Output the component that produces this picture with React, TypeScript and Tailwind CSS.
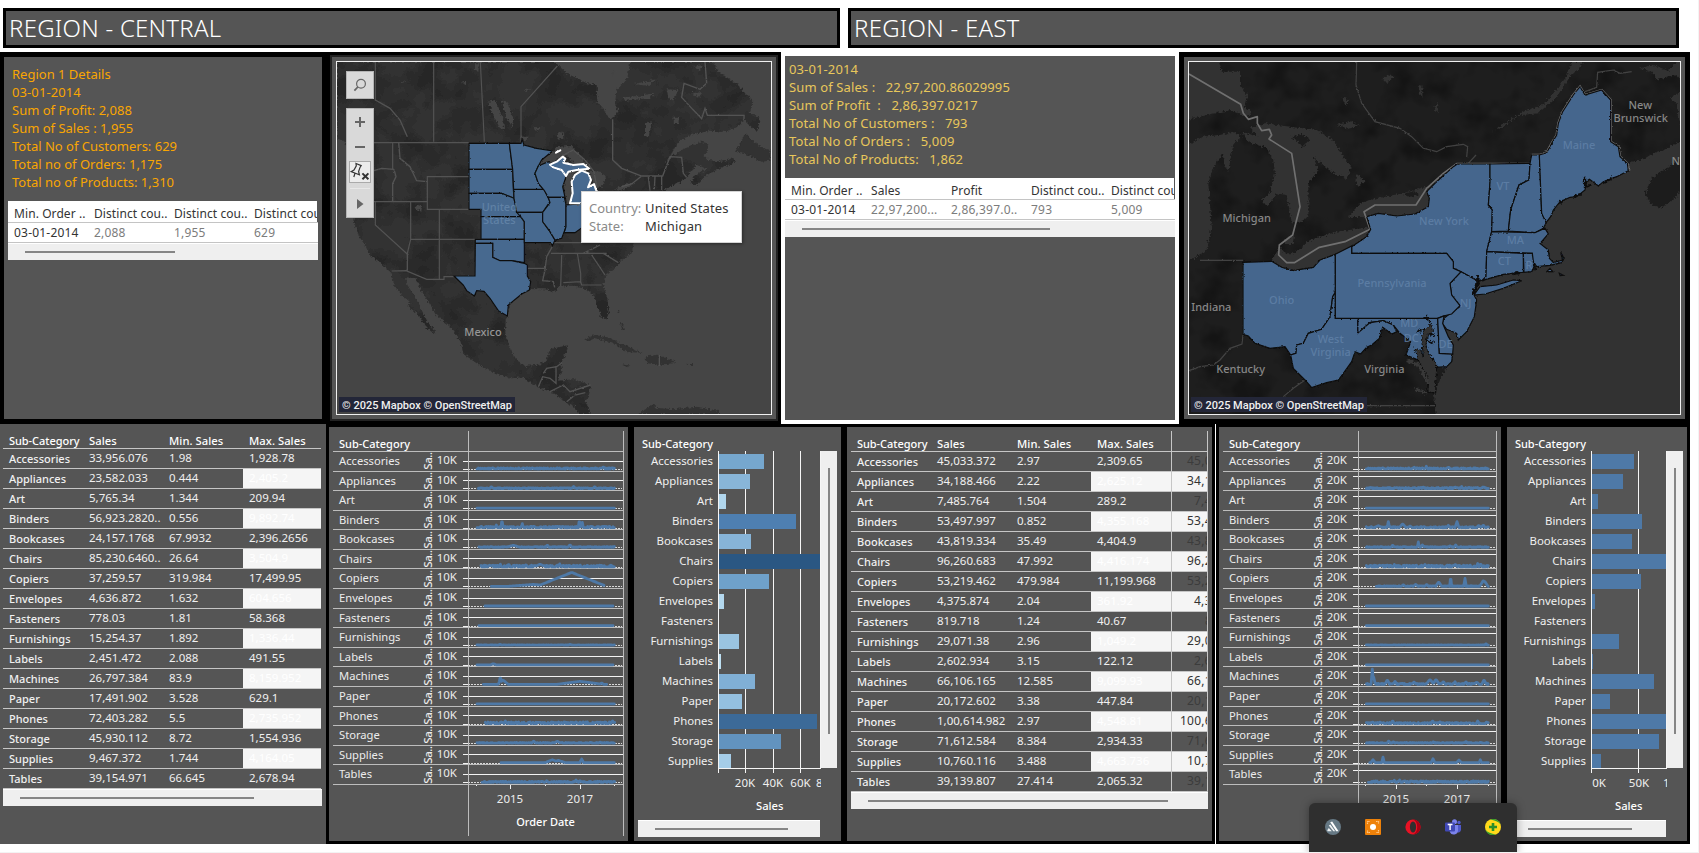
import type { ReactNode } from "react";

const CATEGORIES = [
  "Accessories", "Appliances", "Art", "Binders", "Bookcases", "Chairs", "Copiers", "Envelopes", "Fasteners",
  "Furnishings", "Labels", "Machines", "Paper", "Phones", "Storage", "Supplies", "Tables",
];

const CENTRAL: string[][] = [
  ["33,956.076", "1.98", "1,928.78"], ["23,582.033", "0.444", "2,405.2"], ["5,765.34", "1.344", "209.94"],
  ["56,923.2820..", "0.556", "9,892.74"], ["24,157.1768", "67.9932", "2,396.2656"], ["85,230.6460..", "26.64", "3,504.9"],
  ["37,259.57", "319.984", "17,499.95"], ["4,636.872", "1.632", "604.656"], ["778.03", "1.81", "58.368"],
  ["15,254.37", "1.892", "1,336.44"], ["2,451.472", "2.088", "491.55"], ["26,797.384", "83.9", "8,159.952"],
  ["17,491.902", "3.528", "629.1"], ["72,403.282", "5.5", "2,735.952"], ["45,930.112", "8.72", "1,554.936"],
  ["9,467.372", "1.744", "4,164.05"], ["39,154.971", "66.645", "2,678.94"],
];

const EAST: string[][] = [
  ["45,033.372", "2.97", "2,309.65", "45,0"], ["34,188.466", "2.22", "2,625.12", "34,1"], ["7,485.764", "1.504", "289.2", "7,4"],
  ["53,497.997", "0.852", "4,355.168", "53,4"], ["43,819.334", "35.49", "4,404.9", "43,8"], ["96,260.683", "47.992", "4,416.174", "96,2"],
  ["53,219.462", "479.984", "11,199.968", "53,2"], ["4,375.874", "2.04", "361.92", "4,3"], ["819.718", "1.24", "40.67", "8"],
  ["29,071.38", "2.96", "1,049.2", "29,0"], ["2,602.934", "3.15", "122.12", "2,6"], ["66,106.165", "12.585", "9,099.93", "66,1"],
  ["20,172.602", "3.38", "447.84", "20,1"], ["1,00,614.982", "2.97", "4,548.81", "100,6"], ["71,612.584", "8.384", "2,934.33", "71,6"],
  ["10,760.116", "3.488", "4,663.736", "10,7"], ["39,139.807", "27.414", "2,065.32", "39,1"],
];

const NOTO = "font-['Noto_Sans',sans-serif]";

function Title({ children, className }: { children: ReactNode; className: string }) {
  return (
    <h1 className={`flex h-10 shrink-0 items-center border-[3px] border-black bg-[#555] pl-[3px] text-[24px] font-light tracking-[0.25px] text-white ${className}`}>
      {children}
    </h1>
  );
}

function HScroll({ className, thumb }: { className: string; thumb: string }) {
  return (
    <div className={`flex h-[17px] items-center border-t border-white bg-[#efefef] ${className}`}>
      <div className={`h-[2px] bg-[#858585] ${thumb}`} />
    </div>
  );
}

function WhiteTable({ head, row, thumb, className }: { head: string[]; row: string[]; thumb: string; className: string }) {
  return (
    <div className={`text-[12px] text-[#333] ${className}`}>
      <div className="mr-px flex h-[21px] overflow-hidden bg-white pl-[6px] whitespace-nowrap">
        {head.map((h, i) => (
          <span key={i} className="w-20 shrink-0 pt-[4px] leading-[18px] tracking-[0.08px]">{h}</span>
        ))}
      </div>
      <div className="flex h-[21px] overflow-hidden border-y border-[#c4c4c4] bg-white pl-[6px] leading-[20px] whitespace-nowrap">
        {row.map((h, i) => (
          <span key={i} className={`w-20 shrink-0 tracking-[0.2px] ${i ? "text-[#7c7c7c]" : ""}`}>{h}</span>
        ))}
      </div>
      <HScroll className="" thumb={`ml-[17px] ${thumb}`} />
    </div>
  );
}

function SalesTable({ rows, extra }: { rows: string[][]; extra?: boolean }) {
  return (
    <div className="text-[11.5px] whitespace-nowrap text-[#f0f0f0]">
      <div className="flex h-5 items-end border-b border-[#c6c6c6] pl-[6px] text-[11.2px] leading-[15px] font-medium text-white">
        {["Sub-Category", "Sales", "Min. Sales", "Max. Sales"].map((h) => (
          <span key={h} className={`w-20 shrink-0 ${h === "Sub-Category" ? "text-[11px] tracking-[-0.05px]" : "tracking-[0.05px]"}`}>{h}</span>
        ))}
      </div>
      {rows.map((r, i) => {
        const odd = i % 2 === 1;
        return (
          <div key={i} className="flex h-5 overflow-hidden border-b border-[#c6c6c6] leading-[18px]">
            <span className="w-20 shrink-0 pt-px pl-[6px] text-[11px] leading-[18px] font-medium">{CATEGORIES[i]}</span>
            <span className="w-20 shrink-0 pl-[6px]">{r[0]}</span>
            <span className="w-20 shrink-0 pl-[6px]">{r[1]}</span>
            <span className={`shrink-0 pl-[6px] ${extra ? "w-20" : "w-[78px]"} ${odd ? "bg-[#f5f5f5] text-white" : ""}`}>{r[2]}</span>
            {extra && (
              <span
                className={`w-[37px] shrink-0 overflow-hidden text-[12px] tracking-[0.25px] ${odd ? "bg-[#f5f5f5] text-[#333]" : "text-[#3c3c3c]"}`}
                style={{ paddingLeft: r[3].length === 5 ? 9 : r[3].length === 4 ? 16 : r[3].length === 3 ? 23 : 34 }}
              >
                {r[3]}
              </span>
            )}
          </div>
        );
      })}
    </div>
  );
}

type Spikes = { from: number; to: number; noise: number; peaks: [number, number, number][] };

const CENTRAL_LINES: Spikes[] = [
  { from: 471, to: 884, noise: 3, peaks: [[743, 3, 5], [850, 7, 5], [878, 4, 3]] },
  { from: 475, to: 884, noise: 2, peaks: [[514, 6, 5], [761, 6, 5], [824, 6, 5]] },
  { from: 471, to: 884, noise: 0, peaks: [] },
  { from: 471, to: 884, noise: 4, peaks: [[529, 8, 3], [546, 26, 3], [607, 12, 3], [778, 26, 3], [787, 16, 3]] },
  { from: 477, to: 884, noise: 2, peaks: [[580, 6, 20], [682, 7, 5], [750, 8, 6]] },
  { from: 483, to: 884, noise: 5, peaks: [[541, 8, 3], [566, 10, 3], [617, 6, 3], [660, 8, 16], [719, 9, 3]] },
  { from: 514, to: 852, noise: 0, peaks: [[640, 6, 80], [675, 10, 8], [755, 42, 105], [757, 42, 48], [815, 6, 50]] },
  { from: 495, to: 880, noise: 0, peaks: [] },
  { from: 477, to: 880, noise: 0, peaks: [] },
  { from: 471, to: 884, noise: 1, peaks: [[540, 3, 5], [750, 3, 5]] },
  { from: 471, to: 880, noise: 0, peaks: [[520, 3, 8]] },
  { from: 490, to: 860, noise: 0, peaks: [[541, 23, 5], [549, 13, 16], [780, 9, 70], [783, 9, 8], [845, 4, 6]] },
  { from: 471, to: 884, noise: 0, peaks: [] },
  { from: 496, to: 884, noise: 5, peaks: [[556, 8, 4], [627, 5, 4], [790, 5, 4], [878, 8, 4]] },
  { from: 471, to: 884, noise: 2, peaks: [[641, 6, 5], [712, 6, 10], [840, 4, 4]] },
  { from: 543, to: 884, noise: 0, peaks: [[697, 9, 22], [715, 7, 22], [785, 11, 6]] },
  { from: 486, to: 884, noise: 3, peaks: [[680, 5, 5], [768, 7, 5], [780, 5, 4]] },
];

const EAST_LINES: Spikes[] = [
  { from: 469, to: 836, noise: 3, peaks: [[613, 5, 3], [649, 8, 3], [716, 7, 3]] },
  { from: 469, to: 836, noise: 3, peaks: [[640, 5, 4], [736, 6, 3], [755, 6, 3], [820, 5, 8]] },
  { from: 469, to: 836, noise: 0, peaks: [] },
  { from: 469, to: 836, noise: 3, peaks: [[505, 6, 12], [535, 18, 4], [578, 12, 10], [600, 6, 5], [715, 7, 5], [741, 18, 6], [806, 7, 6], [820, 8, 6]] },
  { from: 469, to: 836, noise: 2, peaks: [[548, 7, 4], [625, 16, 3], [637, 7, 6], [737, 7, 5], [720, 5, 5]] },
  { from: 469, to: 836, noise: 5, peaks: [[532, 7, 4], [553, 7, 4], [645, 7, 6], [736, 8, 6], [803, 10, 4], [812, 10, 4]] },
  { from: 499, to: 836, noise: 2, peaks: [[580, 6, 5], [617, 6, 8], [650, 7, 5], [686, 14, 9], [722, 32, 3], [765, 24, 4], [820, 18, 11], [824, 16, 10]] },
  { from: 469, to: 836, noise: 0, peaks: [] },
  { from: 469, to: 836, noise: 0, peaks: [] },
  { from: 469, to: 836, noise: 1, peaks: [[828, 5, 4]] },
  { from: 469, to: 836, noise: 0, peaks: [] },
  { from: 469, to: 836, noise: 3, peaks: [[487, 46, 4], [491, 22, 5], [532, 14, 7], [555, 9, 6], [612, 8, 5], [660, 15, 12], [678, 15, 10], [700, 9, 6], [735, 8, 5], [768, 8, 5], [800, 7, 8], [822, 14, 7]] },
  { from: 469, to: 836, noise: 0, peaks: [] },
  { from: 469, to: 836, noise: 3, peaks: [[488, 6, 4], [510, 6, 4], [548, 9, 5], [668, 9, 5], [690, 6, 5], [803, 8, 4], [830, 6, 4]] },
  { from: 469, to: 836, noise: 2, peaks: [[536, 7, 5], [550, 5, 4], [670, 5, 4], [768, 6, 4]] },
  { from: 479, to: 836, noise: 0, peaks: [[489, 9, 7], [519, 17, 4], [669, 12, 6], [747, 8, 8], [811, 9, 4]] },
  { from: 475, to: 836, noise: 4, peaks: [[553, 6, 4], [569, 7, 4], [582, 5, 4], [690, 5, 4]] },
];

function trace(s: Spikes, row: number, top: number) {
  const pts: string[] = [];
  for (let x = s.from; x <= s.to; x += 2) {
    const wobble = Math.abs(Math.sin(x * 12.9898 + row * 78.233) * 43758.5453) % 1;
    let h = wobble > 0.55 ? s.noise * wobble : 0;
    for (const [px, ph, pw] of s.peaks) h = Math.max(h, ph * (1 - Math.abs(x - px) / pw));
    pts.push(`${(x / 3 - 9).toFixed(2)},${(top + 17.4 - h / 3).toFixed(2)}`);
  }
  return pts.join(" ");
}

function LinePanel({ data, tick, grid, right, ticks, axisTitle, plot }: {
  data: Spikes[]; tick: string; grid: number; right: number; ticks: number[]; axisTitle: boolean; plot: string;
}) {
  const rowH = 333 / 17;
  return (
    <div className="relative h-full pt-[4px] pl-1 text-[11.5px] text-[#ececec]">
      <div className={`flex h-[21px] items-end border-b border-[#bdbdbd] pl-[6px] text-[11px] leading-[15px] font-medium text-white ${plot}`}>
        <span>Sub-Category</span>
      </div>
      {CATEGORIES.map((c) => (
        <div key={c} className={`flex border-b border-[#bdbdbd] ${plot}`} style={{ height: rowH }}>
          <span className="w-[85px] pl-[6px] text-[11.2px] leading-[17.6px]">{c}</span>
          <span className="flex w-[20px] items-center justify-center">
            <span className="-rotate-90 text-[11.5px] leading-[10px] font-medium tracking-[-0.4px] whitespace-nowrap">Sa..</span>
          </span>
          <span className="flex w-[19px] justify-end leading-[16px] whitespace-nowrap">{tick}</span>
        </div>
      ))}
      <div className="ml-[135px] flex pt-[5px] leading-[18px]" style={{ width: right - 139 }}>
        <span className="text-center" style={{ width: (ticks[1] - 139) * 2 }}>2015</span>
        <span className="text-center" style={{ width: (ticks[3] - 139 - (ticks[1] - 139) * 2) * 2 }}>2017</span>
      </div>
      {axisTitle && <div className="ml-[135px] w-[155px] pt-[5px] text-center text-[11px] leading-[18px] font-medium text-white">Order Date</div>}
      <svg className="absolute top-0 left-0" width="299" height="414" viewBox="0 0 299 414" fill="none">
        {data.map((s, i) => {
          const top = 24.5 + i * rowH;
          const g = Math.round(top + grid) + 0.5;
          const z = Math.round(top + 17.4) + 0.5;
          return (
            <g key={i}>
              <path d={`M134 ${g}H${right}M134 ${z}h5`} stroke="#f2f2f2" />
              <path d={`M139 ${z}H${right - 1}`} stroke="#d8d8d8" strokeDasharray="2 1" />
              <polyline points={trace(s, i, top)} stroke="#4e79a7" strokeWidth="2.8" strokeLinejoin="round" strokeLinecap="round" />
            </g>
          );
        })}
        <path d={`M139.5 4V409M${right + 0.5} 4V409`} stroke="#bdbdbd" />
        {ticks.map((t, i) => (
          <path key={t} d={`M${t + 0.5} 358v${i % 2 ? 4 : 1}`} stroke="#f2f2f2" />
        ))}
      </svg>
    </div>
  );
}

function BarPanel({ ends, colors, origin, gridX, right, children, thumb }: {
  ends: number[]; colors: string[]; origin: number; gridX: number[]; right: number; children: ReactNode; thumb: string;
}) {
  return (
    <div className="flex h-full flex-col pt-[9px]">
      <div className="w-[79px] text-right text-[11px] leading-[15px] font-medium text-white">Sub-Category</div>
      <div className="flex h-[317px]">
        <div className="w-[79px] overflow-hidden text-right text-[11.4px] text-[#f0f0f0]">
          {CATEGORIES.slice(0, 16).map((c) => (
            <div key={c} className="h-5 leading-[20px]">{c}</div>
          ))}
        </div>
        <svg className="ml-[5px] h-[322px] shrink-0" style={{ width: right - 84 }} viewBox={`84 24 ${right - 84} 322`} fill="none">
          {gridX.map((x) => (
            <path key={x} d={`M${x + 0.5} 24V346`} stroke="#f5f5f5" />
          ))}
          {ends.map((e, i) => e > 0 && <rect key={i} x={85} y={27 + i * 20} width={e / 3 - origin - 85} height={i === 15 ? 14 : 15} fill={colors[i % colors.length]} />)}
          <path d={`M84.5 24V346M84 341.5H${right}M${right - 0.5} 24V341`} stroke="#f5f5f5" />
        </svg>
        <div className="flex h-[317px] w-4 justify-center bg-[#efefef] pt-[17px]">
          <div className="h-[266px] w-[2px] bg-[#858585]" />
        </div>
      </div>
      <div className="flex h-[23px] items-end overflow-hidden text-[11.5px] leading-[16px] text-[#f0f0f0]" style={{ width: right }}>{children}</div>
      <div className="pt-[7px] pl-[122px] text-[11.2px] leading-[16px] font-medium text-white">
        <span className={right > 170 ? "" : "-ml-[14px]"}>Sales</span>
      </div>
      <div className="pt-[6px] pl-1">
        <div style={{ width: right - 5 }}>
          <HScroll className="" thumb={`ml-[17px] ${thumb}`} />
        </div>
      </div>
    </div>
  );
}

const CENTRAL_COLORS = [
  "#76a7ce", "#88b5d8", "#b0d6ed", "#4e7fb1", "#87b4d8", "#2a5783", "#6fa1ca", "#b3d8ee", "#bddff2",
  "#9ac4e1", "#bddff2", "#80afd5", "#94c0e0", "#3c6a98", "#6293bf", "#a5cde8",
];

function Attribution() {
  return (
    <div className="absolute bottom-[2px] left-[2px] h-[15px] bg-[#232638] px-[3px] pt-px font-['Roboto',sans-serif] text-[11px] leading-[15px] font-medium whitespace-nowrap text-[#f0f0f0]">
      © 2025 Mapbox © OpenStreetMap
    </div>
  );
}

function Rough({ id, scale }: { id: string; scale: number }) {
  return (
    <filter id={id} x="-5%" y="-5%" width="110%" height="110%">
      <feTurbulence type="fractalNoise" baseFrequency="0.14" numOctaves="2" seed="4" result="n" />
      <feDisplacementMap in="SourceGraphic" in2="n" scale={scale} xChannelSelector="R" yChannelSelector="G" />
    </filter>
  );
}

function Relief({ id, tone }: { id: string; tone: string }) {
  return (
    <filter id={id} x="0" y="0" width="100%" height="100%">
      <feTurbulence type="fractalNoise" baseFrequency="0.011" numOctaves="3" seed="11" result="n" />
      <feColorMatrix in="n" type="matrix" values={tone} result="c" />
      <feComposite in="c" in2="SourceGraphic" operator="in" />
    </filter>
  );
}

const WEST_LAND =
  "M51 66H705L740 100 800 130 830 135 832 185 850 205 870 240 895 215 885 190 890 150 920 120 932 66H1178L1200 100 1225 115 1260 140 1275 160 1300 185 1290 218 1320 235 1312 275 1270 240 1250 262 1215 275 1170 272 1110 285 1075 305 1055 340 1035 370 1055 350 1085 330 1140 305 1165 310 1160 335 1150 345 1165 360 1205 365 1240 355 1245 368 1200 385 1160 405 1125 438 1112 430 1125 405 1160 385 1130 375 1110 400 1090 420 1050 440 1030 455 1022 470 1000 490 960 530 940 612 935 640 905 660 880 690 855 708 850 735 862 775 866 815 860 838 845 832 832 800 822 765 800 748 775 742 740 738 712 742 706 757 680 748 630 747 605 762 575 780 562 828 557 840 556 880 572 930 590 960 615 978 650 975 678 965 690 928 745 915 740 935 722 968 726 990 712 1022 760 1018 812 1036 808 1060 796 1085 810 1112 808 1122H775L765 1100 735 1085 700 1058 650 1040 610 1012 575 1015 520 998 470 970 430 942 422 905 395 865 350 825 325 785 300 745 288 715 258 712 262 735 285 770 300 800 325 850 348 875 342 880 318 862 295 825 262 795 275 790 245 765 222 735 215 700 172 660 148 645 138 620 115 585 100 540 108 490 92 440 95 360 75 305 51 295Z";

const WEST_STATES = [
  "M447 310H568L578 388H447Z", "M447 388H578L580 448 582 475 545 460H447Z",
  "M568 310H603L606 298 612 315 650 325 698 333 665 360 655 378 645 400 655 430 672 450H581L578 388Z",
  "M447 460H545L582 475 590 515 602 530H483V508H447Z", "M483 530H602L613 545V598H483Z",
  "M466 598H613V668L575 662 540 662 518 652V610H466Z",
  "M466 610H518V652L540 662 575 662 613 670 622 675 622 708 632 725 628 750 605 762 565 795 562 828 535 812 510 775 492 754 470 752 463 768 440 752 430 735 402 708H465Z",
  "M581 448H672L690 485 668 517H590L582 475Z", "M590 517H668V545L690 575 705 600 697 618 693 608H613V545L602 530Z",
  "M655 378 685 365 702 380 732 392 738 410 728 440 735 472H685L672 450 655 430 645 400Z",
  "M685 472H733L738 495V560L725 595 705 600 690 575 668 545V517L690 488Z", "M738 495 790 491V560L765 578 733 578 738 560Z",
];

function CentralMap() {
  return (
    <svg className="block" width="434" height="352" viewBox="51 66 1302 1056" fill="none">
      <defs>
        <Rough id="wr" scale={15} />
        <Rough id="wr2" scale={6} />
        <Relief id="wt" tone="0 0 0 0 0  0 0 0 0 0  0 0 0 0 0  3 0 0 0 -1.3" />
      </defs>
      <rect x="51" y="66" width="1302" height="1056" fill="#454545" />
      <g filter="url(#wr)">
        <g fill="#303030">
          <path d={WEST_LAND} />
          <path d="M795 897 825 885 862 892 920 918 968 938 918 936 880 908 825 895 800 905ZM975 950 1012 944 1072 968 1020 974 982 970ZM903 973 930 977 922 982ZM1098 971 1122 973 1118 979ZM955 1122 1000 1093 1012 1104 1060 1108 1130 1100 1200 1114 1200 1122ZM1275 280 1295 300 1330 325 1352 330 1348 362 1325 365 1285 345 1245 335 1262 310ZM900 845h6l6 24h-5zM893 812h5v6h-5z" />
        </g>
        <path d={WEST_LAND} fill="#fff" filter="url(#wt)" opacity="0.2" />
        <g fill="#454545">
          <path d="M655 375 668 352 700 335 712 320 755 318 785 355 800 376 765 374 745 350 728 348 690 372Z" />
          <path d="M736 402 765 393 760 420 757 460 750 490H738L732 455ZM806 392 845 395 858 415 845 440 826 445 812 410ZM880 448 930 428 938 434 900 452ZM833 470 880 450 870 470 840 485ZM505 185 525 180 550 240 552 272 538 262 515 215ZM545 180 562 185 582 240 578 262 560 235ZM602 290h22l-8 18zM710 280l18-5 2 22-18-2zM640 262h24l-12 12zM286 494 306 498 304 515 290 508ZM236 122l25 3-20 4zM425 128l15-3-4 13zM465 75l12-9-2 30-10-6zM610 145l22 3-18 6zM910 172 955 168 1005 158 985 175 915 182ZM940 132 1010 118 985 138ZM1040 148 1075 150 1060 182 1045 172ZM1060 230h16v22h-14zM1120 80l30-6-10 20zM1110 160l38-4-10 14zM975 250l20-6-8 44-12 4zM880 92l6 6-10 10z" />
        </g>
      </g>
      <g stroke="#535353" strokeWidth="4" filter="url(#wr2)">
        <path d="M262 290 240 240 210 205 166 180M878 238V360L905 385 965 408H1028L1050 350 1085 352 1090 400 1100 412M1155 66 1160 130 1140 148 1092 130 1085 172 1118 208 1145 236 1155 205 1162 226H1272V240M236 308 240 355 270 380 290 422 322 425M162 392 185 385 222 388M222 388 228 410 218 430V485M262 640V690L258 692M697 620 680 650 675 690 668 722 700 725 704 742M790 640 840 615M815 645 855 705M850 640 895 668M670 1000 680 985 710 980 726 968M655 1040 668 1010 690 1015 708 1030V978M690 1055 730 1035 750 1055 812 1035M740 1085 765 1065 796 1058M1018 945V978M965 408 935 432 905 440M985 410 990 452M1005 410 1003 448M1025 408V455M722 350 760 330 795 360 822 395 830 440" />
      </g>
      <g stroke="#535353" strokeWidth="3.5">
        <path d="M166 66V182M341 66V305M481 66 493 305M603 305V200L712 78M160 308H447M218 308V388M322 425V410H447M162 485H322V425M322 485V508H447M358 508V718M272 485V598H482M166 485V555L265 645M272 598 262 640M215 693 258 692 320 718H372V710H403M613 608H785M622 685H672M693 640H860M725 645 722 740M772 640 782 700V730M730 728 782 725 785 735H845" />
      </g>
      <g stroke="#101010" strokeWidth="3.5" fill="#46698f" filter="url(#wr2)">
        {WEST_STATES.map((d) => <path key={d} d={d} />)}
      </g>
      <g fill="#6c8db0" fillOpacity="0.7" fontFamily="Noto Sans" fontSize="33" textAnchor="middle" fontWeight="500">
        <text x="538" y="512">United</text>
        <text x="538" y="552">States</text>
      </g>
      <text x="489" y="888" fill="#969696" fontFamily="Noto Sans" fontSize="33" fontWeight="500" textAnchor="middle">Mexico</text>
      <g fill="#46698f" stroke="#fff" strokeWidth="6" strokeLinejoin="round" filter="url(#wr2)">
        <path d="M690 374 712 364 728 350 736 356 730 368 760 375 790 372 808 386 770 390 745 395 738 408 725 390 700 382ZM772 400 785 392 805 400 813 420 804 442 822 432 830 455 820 490H750L758 460 755 425 765 405ZM708 338 721 331Z" />
      </g>
    </svg>
  );
}

const EAST_STATES = [
  "M496 643 545 618V640H830L850 665V685L873 695 840 730 845 765 870 797 845 822 820 828 803 835H496Z",
  "M803 835 822 828 818 850 835 890 850 915 848 942 808 940Z",
];
const EAST_ROUGH = [
  "M219 667 305 664 335 682 368 692 430 682 450 660 496 643V757L488 770 480 830 455 868 415 880 400 910 380 915 378 940 362 945 345 920 300 925 255 910 235 888 219 883Z",
  "M545 620 590 590 602 568 590 530 625 520 680 528 735 522 775 500 778 475 770 455 795 430 850 380 862 372 960 372 960 430 955 495 967 510 965 575 950 635 948 710 940 722 922 722 873 695 850 685 850 665 830 640 545 640Z",
  "M960 372 1080 370 1077 420 1047 435 1022 510 1015 573 965 575 967 510 955 495 960 430Z",
  "M1080 370 1085 345 1108 345 1115 520 1130 545 1120 565 1095 578 1015 573 1022 510 1047 435 1077 420Z",
  "M1108 345 1130 338 1145 310 1160 285 1165 250 1178 215 1210 165 1230 140 1245 165 1295 150 1322 180V305L1345 320 1350 350 1372 370 1375 392 1340 410 1300 425 1285 438 1275 430 1258 418 1250 425 1245 450 1220 470 1200 472 1170 485 1150 510 1142 530 1128 548 1115 520Z",
  "M965 575 1095 578 1125 565 1135 582 1110 610 1135 630 1138 655 1150 668 1178 660 1172 637 1182 655 1175 668 1140 676 1100 680 1087 660V640L950 635Z",
  "M950 635 1060 640V697L1000 703 935 722 948 710Z",
  "M1060 640H1087L1092 680 1085 695 1062 697Z",
  "M912 765 930 740 980 735 1030 720 1055 722 1000 745 945 762ZM1130 695l10-10 8 10zM1168 700l12 6-10 1z",
  "M873 695 922 722 912 765 920 780 913 830 890 875 865 900 860 880 830 868 817 850 822 835 870 797 845 765 840 730Z",
  "M563 835H803L808 940 848 942 845 965 830 980 797 982 790 955 765 965 740 958 708 945 722 905 690 880 670 855 640 842 600 848 563 880Z",
  "M496 757V835H563V880L600 848 640 842 670 855 680 875 665 882 638 862 628 895 605 915 590 922 572 942 555 935 545 965 520 1000 505 1020 470 1028 425 1043 405 1020 370 985 362 945 378 940 380 915 400 910 415 880 455 868 480 830 488 770Z",
];

function EastMap() {
  return (
    <svg className="block" width="491" height="352" viewBox="57 66 1473 1056" fill="none">
      <defs>
        <Rough id="er" scale={16} />
        <Rough id="er2" scale={7} />
        <Relief id="et" tone="0 0 0 0 0  0 0 0 0 0  0 0 0 0 0  3 0 0 0 -1.35" />
      </defs>
      <rect x="57" y="66" width="1473" height="1056" fill="#1e1e1e" />
      <rect x="57" y="66" width="1473" height="1056" fill="#fff" filter="url(#et)" opacity="0.3" />
      <g fill="#333" filter="url(#er)">
        <path d="M1560 290 1490 325 1450 340 1420 358 1385 365 1365 395 1300 415 1200 430 1140 480 1100 550 1100 690 940 715 905 765 910 830 865 890 820 840 825 890 835 975 812 985 792 1060 800 1160H1560Z" />
        <path d="M30 40H140L155 95 210 95 210 135 232 165 222 200 245 215 235 230 180 210 110 225 30 245ZM30 325 100 290 150 285 190 275 215 290 190 310 175 395 160 370V340L130 380 115 430 125 560 110 630 30 680ZM215 275 265 290 240 265 285 250 370 262 440 270 490 300 520 350 545 380 530 415 490 400 430 350 445 390 415 430V530L385 550 365 545 350 465 320 460 290 498 275 480 300 460 315 400 310 360 290 325 235 305ZM340 598 372 588 368 612 345 612ZM305 662 330 620 345 640 375 640 420 600 500 575 600 562 590 590 545 622 495 645 430 685 370 694 330 682ZM535 530 570 490 620 475 700 460 790 435 780 470V500L740 524 690 532 630 522 595 532Z" />
        <path d="M1205 66H1245L1200 110 1160 170 1105 220 1050 225 1000 258 968 276 1010 245 1060 215 1120 195 1150 160 1190 110ZM1410 85 1450 75 1495 92 1520 66H1560V150L1520 105 1460 120 1445 95ZM1560 140 1500 175 1520 190 1530 250H1560ZM635 115l25-12 10 10-22 16zM745 140l12-4v38l-10-12zM515 172l20 6-8 20zM500 254l40-8 30 10-35 10zM560 402l24 20-18 20-10-18zM790 200l16-12-4 30z" />
      </g>
      <g fill="#1b1b1b" filter="url(#er)">
        <path d="M1560 335 1490 385 1445 415 1425 460 1440 488 1468 505 1510 480 1530 455H1560ZM365 290l30-8 25 14-20 24zM700 462l30-8 20 10-30 6z" />
        <path d="M800 985 830 982 805 1030 790 1060Z" />
      </g>
      <g stroke="#434343" strokeWidth="3.5" filter="url(#er2)">
        <path d="M560 66 558 135 575 190 615 245 690 265 725 290 760 325 800 335 830 320 880 313 893 320 890 352M895 370 918 345M1245 155 1280 142 1283 97 1330 90 1350 100 1385 95M219 883 216 912 180 925 150 960 130 975 90 980 57 992M340 1070 370 1045 405 1020" />
        <path d="M90 661H219M590 1097H795" />
      </g>
      <path d="M57 102 212 193 220 220 235 238 262 230V250L275 272 298 268 305 285 297 297 365 340 390 500 368 585 328 615 326 645 350 668H373L448 622 525 605 600 568 582 515 615 495H738L770 445 820 400 860 371H1080" stroke="#707070" strokeWidth="5" strokeLinejoin="round" />
      <g stroke="#777" strokeWidth="7" filter="url(#er2)">
        <path d="M1085 345 1108 345 1130 338 1145 310 1160 285 1165 250 1178 215 1210 165 1230 140 1245 165 1295 150 1322 180V305L1345 320 1350 350 1372 370 1378 392" />
      </g>
      <g fill="#45668d" stroke="#0c0c0c" strokeWidth="3.5">
        <g filter="url(#er2)">
          {EAST_ROUGH.map((d) => <path key={d} d={d} />)}
        </g>
        {EAST_STATES.map((d) => <path key={d} d={d} />)}
      </g>
      <g filter="url(#er)">
        <path d="M770 862 785 850 790 872 772 885 768 915 775 940 800 975 797 1060 775 1055 770 1010 745 960 735 925 752 930 760 950 755 900 762 870Z" fill="#333" stroke="#0c0c0c" strokeWidth="3" />
        <path d="M710 960 745 975 775 1030M735 1045 770 1060" stroke="#383838" strokeWidth="9" />
        <path d="M765 828 780 845M922 705V735L905 765M1090 665 1098 690M1245 410V440L1265 435M1165 490 1180 482M1210 470 1235 462M1300 430 1330 412M780 880l14 8M775 905l16 4M755 875l-12-4M1030 702l20-4" stroke="#0c0c0c" strokeWidth="7" />
      </g>
      <g fontFamily="Noto Sans" fontSize="33" fontWeight="500" textAnchor="middle">
        <g fill="#878787">
          <text x="230" y="545">Michigan</text>
          <text x="124" y="814">Indiana</text>
          <text x="212" y="999">Kentucky</text>
          <text x="643" y="1000">Virginia</text>
          <text x="1411" y="208">New</text>
          <text x="1412" y="247">Brunswick</text>
          <text x="1517" y="374">N</text>
        </g>
        <g fill="#6283aa" fillOpacity="0.8">
          <text x="335" y="792">Ohio</text>
          <text x="666" y="741">Pennsylvania</text>
          <text x="822" y="554">New York</text>
          <text x="1227" y="327">Maine</text>
          <text x="999" y="450">VT</text>
          <text x="1036" y="611">MA</text>
          <text x="1003" y="676">CT</text>
          <text x="1077" y="686">R</text>
          <text x="887" y="801">NJ</text>
          <text x="718" y="861">MD</text>
          <text x="724" y="906">DC</text>
          <text x="827" y="925">DE</text>
          <text x="482" y="909">West</text>
          <text x="482" y="948">Virginia</text>
        </g>
      </g>
    </svg>
  );
}

function MapTools() {
  return (
    <div className="absolute top-[9px] left-[9px] flex flex-col gap-[9px]">
      <div className="flex h-7 w-7 items-center justify-center border border-[#b4b4b4] bg-[#d9d9d9]">
        <svg width="14" height="14" viewBox="0 0 14 14" fill="none" stroke="#666" strokeWidth="1.2">
          <circle cx="8" cy="5.8" r="4.4" />
          <path d="M4.8 9 1.4 12.6" strokeWidth="1.8" />
        </svg>
      </div>
      <svg className="block" width="28" height="110" viewBox="0 0 28 110" fill="none">
        <rect x="0.5" y="0.5" width="27" height="109" fill="#d9d9d9" stroke="#b4b4b4" />
        <path d="M9 14H19M14 9V19M9 39H19" stroke="#666" strokeWidth="2" />
        <rect x="3.5" y="53.5" width="21" height="21" fill="#ececec" stroke="#aaa" />
        <path d="M10 55.5 15.2 57.6 14 59.4 12.600 63.500 13.400 66.800 9.400 65.200 5.200 63.600 8 62 10.300 57.800ZM9 65.200 7.800 69" stroke="#333" strokeWidth="1.2" />
        <path d="M16.4 65.4 22.4 71.2M22.4 65.4 16.4 71.2" stroke="#333" strokeWidth="2" />
        <path d="M4 80.5H24" stroke="#e8e8e8" />
        <path d="M11 91 17.5 96 11 101Z" fill="#666" />
      </svg>
    </div>
  );
}

function Tray() {
  return (
    <div className="absolute top-[803px] left-[1309px] flex h-[50px] w-[208px] justify-center gap-6 rounded-t-[6px] bg-[#2f2f2f] pt-4 shadow-[0_0_8px_rgba(0,0,0,0.35)]">
      <svg width="16" height="16" viewBox="0 0 16 16">
        <circle cx="8" cy="8" r="8" fill="#667985" />
        <path d="M5.2 3.2 7.2 2.4 13.6 12.2 11.2 12.2Z" fill="#fff" />
        <path d="M3.800 6.600 5.400 5.400 10.200 12.200H8.400ZM2.400 11 3.800 9 6.800 12.200H2.400Z" fill="#f0f3f4" />
      </svg>
      <svg width="16" height="16" viewBox="0 0 16 16" fill="none">
        <rect width="16" height="16" rx="1" fill="#ee8109" />
        <circle cx="8" cy="8" r="3" fill="#fff" />
        <path d="M2.5 5V2.5H5M11 2.5h2.5V5M13.5 11v2.5H11M5 13.5H2.5V11" stroke="#ffc98a" strokeWidth="1.2" strokeDasharray="1.6 .6" />
      </svg>
      <svg width="16" height="16" viewBox="0 0 16 16">
        <circle cx="8" cy="8" r="7.6" fill="#e81224" />
        <path d="M8 .4a7.6 7.6 0 0 1 0 15.2c3.200-1.400 4.200-4.400 4.200-7.600S11.200 1.800 8 .4Z" fill="#a70014" />
        <ellipse cx="8" cy="8" rx="3.1" ry="5.5" fill="#2f2f2f" />
      </svg>
      <svg width="16" height="16" viewBox="0 0 16 16">
        <circle cx="9.5" cy="2.8" r="2.5" fill="#7b83eb" />
        <circle cx="14" cy="3.5" r="1.7" fill="#5059c9" />
        <path d="M11 6h5v4.5a3 3 0 0 1-4 2.8Z" fill="#5059c9" />
        <path d="M5 6h8v5.5a4.3 4.3 0 0 1-8.2 1.5Z" fill="#7b83eb" />
        <rect y="3.5" width="10" height="9" rx="1" fill="#4048b5" />
        <path d="M2.7 5.5h4.8M5.1 5.5V11" stroke="#fff" strokeWidth="1.4" />
      </svg>
      <svg width="16" height="16" viewBox="0 0 16 16">
        <circle cx="8" cy="8" r="8" fill="#ffd91a" />
        <path d="M8 0a8 8 0 0 1 7.6 5.5C13.5 2.5 10 1.5 5 .6ZM8 16A8 8 0 0 1 .4 10.5C2.5 13.5 6 14.5 11 15.4Z" fill="#2f9e2f" />
        <path d="M8 4v8M4 8h8" stroke="#2a8f2a" strokeWidth="2.6" />
      </svg>
    </div>
  );
}

export default function App() {
  return (
    <div className={`relative h-[853px] w-[1699px] overflow-hidden border-r border-b border-[#f3f3f3] bg-white ${NOTO}`}>
      <header className="flex h-[52px] gap-2 pt-2 pl-[3px]">
        <Title className="w-[837px]">REGION - CENTRAL</Title>
        <Title className="w-[831px]">REGION - EAST</Title>
      </header>

      <section className="flex h-[372px] w-[1690px]">
        <div className="w-[330px] bg-black pt-[5px] pl-1">
          <div className="h-[362px] w-[318px] bg-[#555] pt-[8px]">
            <div className="pl-[8px] text-[13px] leading-[18px] text-[#f9a602]">
              <p>Region 1 Details</p>
              <p className="tracking-[0.1px]">03-01-2014</p>
              <p>Sum of Profit: 2,088</p>
              <p>Sum of Sales : 1,955</p>
              <p>Total No of Customers: 629</p>
              <p>Total no of Orders: 1,175</p>
              <p>Total no of Products: 1,310</p>
            </div>
            <WhiteTable
              className="mt-[10px] ml-1 w-[310px]"
              head={["Min. Order ..", "Distinct cou..", "Distinct cou..", "Distinct cou.."]}
              row={["03-01-2014", "2,088", "1,955", "629"]}
              thumb="w-[150px]"
            />
          </div>
        </div>

        <div className="w-[451px] bg-black pt-[3px]">
          <div className="h-[366px] w-[448px] border-2 border-[#222] bg-[#555] pt-1 pl-1">
            <div className="relative h-[354px] w-[436px] border border-[#f0f0f0]">
              <CentralMap />
              <MapTools />
              <Attribution />
              <div className="absolute top-[129px] left-[244px] grid h-[52px] w-[161px] grid-cols-[56px_1fr] content-center border border-[#d4d4d4] bg-white pl-[7px] text-[13px] leading-[18px] text-[#333] shadow-[1px_1px_3px_rgba(0,0,0,0.4)]">
                <span className="text-[#8a8a8a]">Country:</span><span className="tracking-[0.15px]">United States</span>
                <span className="text-[#8a8a8a]">State:</span><span className="tracking-[0.15px]">Michigan</span>
              </div>
            </div>
          </div>
        </div>

        <div className="w-[398px] bg-white p-1">
          <div className="h-[364px] bg-[#555] pt-[4px]">
            <div className="pl-[4px] text-[13px] leading-[18px] tracking-[0.12px] whitespace-pre text-[#e8c75b]">
              <p>03-01-2014</p>
              <p>{"Sum of Sales :   22,97,200.86029995"}</p>
              <p>{"Sum of Profit  :   2,86,397.0217"}</p>
              <p>{"Total No of Customers :   793"}</p>
              <p>{"Total No of Orders :   5,009"}</p>
              <p>{"Total No of Products:   1,862"}</p>
            </div>
            <WhiteTable
              className="mt-[10px] w-[390px]"
              head={["Min. Order ..", "Sales", "Profit", "Distinct cou..", "Distinct cou.."]}
              row={["03-01-2014", "22,97,200...", "2,86,397.0..", "793", "5,009"]}
              thumb="w-[248px]"
            />
          </div>
        </div>

        <div className="w-[511px] bg-black p-[5px]">
          <div className="h-[362px] bg-[#555] pt-1 pl-1">
            <div className="relative h-[354px] w-[493px] border border-[#f0f0f0]">
              <EastMap />
              <Attribution />
            </div>
          </div>
        </div>
      </section>

      <section className="flex h-[420px] w-[1690px] bg-black">
        <div className="w-[326px] bg-[#555] pt-[5px] pl-[3px]">
          <div className="w-[318px]"><SalesTable rows={CENTRAL} /></div>
          <HScroll className="w-[319px]" thumb="ml-[17px] w-[234px]" />
        </div>

        <div className="mt-[3px] ml-[3px] h-[414px] w-[299px] bg-[#555]">
          <LinePanel data={CENTRAL_LINES} tick="10K" grid={9} right={294} ticks={[147, 181, 216, 251, 285]} axisTitle plot="w-[290px]" />
        </div>

        <div className="mt-[3px] ml-[6px] h-[414px] w-[207px] bg-[#555]">
          <BarPanel
            ends={[432, 390, 318, 528, 393, 600, 447, 312, 0, 357, 303, 405, 366, 591, 483, 333]}
            colors={CENTRAL_COLORS} origin={14} gridX={[111, 139, 166]} right={187} thumb="w-[133px]"
          >
            <span className="ml-[97px] w-7 shrink-0 text-center">20K</span>
            <span className="w-7 shrink-0 text-center">40K</span>
            <span className="w-[27px] shrink-0 text-center">60K</span>
            <span className="ml-[2px] w-[5px] overflow-hidden">8</span>
          </BarPanel>
        </div>

        <div className="mt-[3px] ml-[6px] h-[414px] w-[365px] bg-[#555] pt-[5px] pl-1">
          <div className="relative w-[357px]">
            <SalesTable rows={EAST} extra />
            <div className="absolute -top-px right-0 bottom-0 w-[37px] border-x border-[#c6c6c6]" />
          </div>
          <HScroll className="w-[357px]" thumb="ml-[17px] w-[300px]" />
        </div>

        <div className="ml-[3px] w-px bg-white" />

        <div className="mt-[3px] ml-[3px] h-[414px] w-[282px] bg-[#555]">
          <LinePanel data={EAST_LINES} tick="20K" grid={5} right={277} ticks={[146, 177, 207, 238, 269]} axisTitle={false} plot="w-[273px]" />
        </div>

        <div className="mt-[3px] ml-[6px] h-[414px] w-[180px] bg-[#555]">
          <BarPanel
            ends={[462, 429, 354, 486, 456, 558, 483, 345, 0, 417, 339, 522, 390, 558, 537, 363]}
            colors={["#4e79a7"]} origin={27} gridX={[131]} right={160} thumb="w-[104px]"
          >
            <span className="ml-[78px] w-7 shrink-0 text-center">0K</span>
            <span className="ml-[12px] w-7 shrink-0 text-center">50K</span>
            <span className="ml-[10px] shrink-0">1</span>
          </BarPanel>
        </div>
      </section>

      <Tray />
    </div>
  );
}
